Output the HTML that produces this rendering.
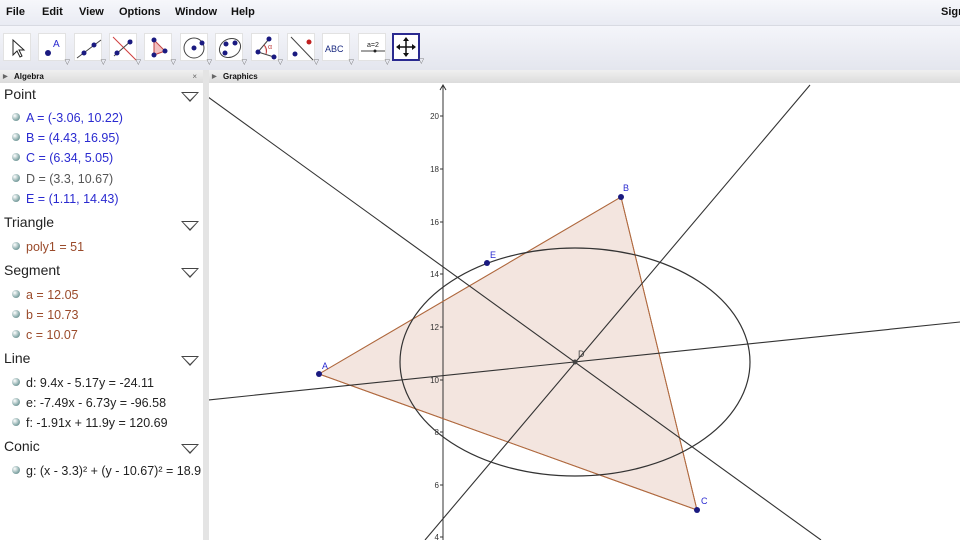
<!DOCTYPE html>
<html><head><meta charset="utf-8"><style>
*{margin:0;padding:0;box-sizing:border-box}
body{width:960px;height:540px;overflow:hidden;background:#fff;font-family:"Liberation Sans",sans-serif;position:relative}
#menu{position:absolute;left:0;top:0;width:960px;height:26px;background:linear-gradient(#f6f7fb,#e9ebf3);border-bottom:1px solid #d8dae2}
#menu span{position:absolute;top:6px;font-size:11px;font-weight:bold;color:#111}
#tb{position:absolute;left:0;top:26px;width:960px;height:44px;background:linear-gradient(#f4f5fa,#e4e6ee)}
.tool{position:absolute;top:7px;width:28px;height:28px;background:#fff;border:1px solid #e2e2e2}
.tool .dd{position:absolute;right:-5px;bottom:-6px;font-size:7px;color:#666}
#ttl{position:absolute;top:70px;height:13px;background:linear-gradient(#f0f0f0,#dcdcdc);font-size:8px;font-weight:bold;color:#111;padding-left:14px;line-height:14px}
#alg{position:absolute;left:0;top:83px;width:203px;height:457px;background:#fff}
#split{position:absolute;left:203px;top:70px;width:6px;height:470px;background:#e4e4e4}
.h{position:absolute;left:4px;font-size:14px;color:#222}
.tri{position:absolute;left:181px;width:0;height:0;border-left:9px solid transparent;border-right:9px solid transparent;border-top:10px solid #444}
.tri:after{content:"";position:absolute;left:-7px;top:-9px;border-left:7px solid transparent;border-right:7px solid transparent;border-top:7px solid #fff}
.it{position:absolute;left:12px;font-size:12.5px;white-space:nowrap}
.it:before{content:"";display:inline-block;width:8px;height:8px;border-radius:50%;background:radial-gradient(circle at 35% 35%,#fff,#8aa 60%,#577);margin-right:6px;vertical-align:1px}
.b{color:#2a2ad0}.g{color:#555}.r{color:#9a4a2a}.k{color:#222}
</style></head><body>
<div id="menu">
<span style="left:6px">File</span><span style="left:42px">Edit</span><span style="left:79px">View</span><span style="left:119px">Options</span><span style="left:175px">Window</span><span style="left:231px">Help</span><span style="left:941px">Sign</span>
</div>
<div id="tb">
<div class="tool" style="left:3px"><svg width="28" height="28"><path d="M9 6 L9 21 L13 17 L16 23 L18 22 L15 16 L20 16 Z" fill="#fff" stroke="#222"/></svg></div>
<div class="tool" style="left:38px"><svg width="28" height="28"><circle cx="9" cy="19" r="3" fill="#1a1a80"/><text x="14" y="13" font-size="10" fill="#2a2ad0" font-family="Liberation Sans">A</text></svg><span class="dd">▽</span></div>
<div class="tool" style="left:74px"><svg width="28" height="28"><line x1="2" y1="24" x2="26" y2="6" stroke="#444"/><circle cx="9" cy="19" r="2.5" fill="#1a1a80"/><circle cx="19" cy="11" r="2.5" fill="#1a1a80"/></svg><span class="dd">▽</span></div>
<div class="tool" style="left:109px"><svg width="28" height="28"><line x1="3" y1="3" x2="26" y2="26" stroke="#d04040"/><line x1="4" y1="22" x2="22" y2="6" stroke="#444"/><circle cx="7" cy="19" r="2.5" fill="#1a1a80"/><circle cx="20" cy="8" r="2.5" fill="#1a1a80"/></svg><span class="dd">▽</span></div>
<div class="tool" style="left:144px"><svg width="28" height="28"><path d="M9 6 L20 17 L9 21Z" fill="#f2c0c0" stroke="#c04040"/><circle cx="9" cy="6" r="2.5" fill="#1a1a80"/><circle cx="20" cy="17" r="2.5" fill="#1a1a80"/><circle cx="9" cy="21" r="2.5" fill="#1a1a80"/></svg><span class="dd">▽</span></div>
<div class="tool" style="left:180px"><svg width="28" height="28"><circle cx="13" cy="14" r="10" fill="none" stroke="#444"/><circle cx="13" cy="14" r="2.5" fill="#1a1a80"/><circle cx="21" cy="9" r="2.5" fill="#1a1a80"/></svg><span class="dd">▽</span></div>
<div class="tool" style="left:215px"><svg width="28" height="28"><ellipse cx="14" cy="14" rx="11" ry="9" fill="none" stroke="#444" transform="rotate(-30 14 14)"/><circle cx="9" cy="19" r="2.5" fill="#1a1a80"/><circle cx="19" cy="9" r="2.5" fill="#1a1a80"/><circle cx="10" cy="10" r="2.5" fill="#1a1a80"/></svg><span class="dd">▽</span></div>
<div class="tool" style="left:251px"><svg width="28" height="28"><path d="M6 18 L17 5 M6 18 L22 23" stroke="#444" fill="none"/><path d="M12 11 A8 8 0 0 1 14 20" fill="#f2c0c0" stroke="#c04040"/><text x="16" y="15" font-size="7" fill="#c04040">α</text><circle cx="17" cy="5" r="2.5" fill="#1a1a80"/><circle cx="6" cy="18" r="2.5" fill="#1a1a80"/><circle cx="22" cy="23" r="2.5" fill="#1a1a80"/></svg><span class="dd">▽</span></div>
<div class="tool" style="left:287px"><svg width="28" height="28"><line x1="3" y1="3" x2="25" y2="26" stroke="#444"/><circle cx="21" cy="8" r="2.5" fill="#c02020"/><circle cx="7" cy="20" r="2.5" fill="#1a1a80"/></svg><span class="dd">▽</span></div>
<div class="tool" style="left:322px"><svg width="28" height="28"><text x="2" y="18" font-size="9" fill="#1a2a80" font-family="Liberation Sans">ABC</text></svg><span class="dd">▽</span></div>
<div class="tool" style="left:358px"><svg width="28" height="28"><text x="8" y="13" font-size="7" fill="#222">a=2</text><line x1="2" y1="17" x2="26" y2="17" stroke="#444"/><circle cx="16" cy="17" r="1.5" fill="#222"/></svg><span class="dd">▽</span></div>
<div class="tool" style="left:392px;border:2px solid #2a2a90"><svg width="24" height="24"><path d="M12 4 V20 M4 12 H20" stroke="#111" stroke-width="1.5"/><path d="M12 2 L9 6 H15Z M12 22 L9 18 H15Z M2 12 L6 9 V15Z M22 12 L18 9 V15Z" fill="#111"/></svg><span class="dd" style="right:-6px">▽</span></div>
</div>
<div id="ttl" style="left:0;width:203px">Algebra<span style="position:absolute;left:3px;top:0;font-size:6px;color:#666">▶</span><span style="position:absolute;right:6px;font-weight:normal;color:#666">×</span></div>
<div id="ttl" style="left:209px;width:751px">Graphics<span style="position:absolute;left:3px;top:0;font-size:6px;color:#666">▶</span></div>
<div id="split"></div>
<div id="alg">
<div class="h" style="top:3px">Point</div><div class="tri" style="top:9px"></div>
<div class="it b" style="top:28px">A = (-3.06, 10.22)</div>
<div class="it b" style="top:48px">B = (4.43, 16.95)</div>
<div class="it b" style="top:68px">C = (6.34, 5.05)</div>
<div class="it g" style="top:89px">D = (3.3, 10.67)</div>
<div class="it b" style="top:109px">E = (1.11, 14.43)</div>
<div class="h" style="top:131px">Triangle</div><div class="tri" style="top:138px"></div>
<div class="it r" style="top:157px">poly1 = 51</div>
<div class="h" style="top:179px">Segment</div><div class="tri" style="top:185px"></div>
<div class="it r" style="top:205px">a = 12.05</div>
<div class="it r" style="top:225px">b = 10.73</div>
<div class="it r" style="top:245px">c = 10.07</div>
<div class="h" style="top:267px">Line</div><div class="tri" style="top:273px"></div>
<div class="it k" style="top:293px">d: 9.4x - 5.17y = -24.11</div>
<div class="it k" style="top:313px">e: -7.49x - 6.73y = -96.58</div>
<div class="it k" style="top:333px">f: -1.91x + 11.9y = 120.69</div>
<div class="h" style="top:355px">Conic</div><div class="tri" style="top:361px"></div>
<div class="it k" style="top:381px">g: (x - 3.3)² + (y - 10.67)² = 18.9</div>
</div>
<svg style="position:absolute;left:0;top:0" width="960" height="540" viewBox="0 0 960 540">
<defs><clipPath id="c"><rect x="209" y="83" width="751" height="457"/></clipPath></defs>
<g clip-path="url(#c)" font-family="Liberation Sans">
<polygon points="319,374 621,197 697,510" fill="#f3e5df" stroke="#b06a40" stroke-width="1"/>
<line x1="443" y1="86" x2="443" y2="540" stroke="#333"/>
<path d="M440 90 L443 85 L446 90" fill="none" stroke="#333"/>
<g font-size="8" fill="#333" text-anchor="end">
<text x="439" y="119">20</text><text x="439" y="172">18</text><text x="439" y="225">16</text><text x="439" y="277">14</text><text x="439" y="330">12</text><text x="439" y="383">10</text><text x="439" y="435">8</text><text x="439" y="488">6</text><text x="439" y="540">4</text>
</g>
<g stroke="#333"><line x1="440" y1="116" x2="443" y2="116"/><line x1="440" y1="169" x2="443" y2="169"/><line x1="440" y1="222" x2="443" y2="222"/><line x1="440" y1="274" x2="443" y2="274"/><line x1="440" y1="327" x2="443" y2="327"/><line x1="440" y1="380" x2="443" y2="380"/><line x1="440" y1="432" x2="443" y2="432"/><line x1="440" y1="485" x2="443" y2="485"/><line x1="440" y1="537" x2="443" y2="537"/></g>
<polygon points="319,374 621,197 697,510" fill="none" stroke="#b06a40" stroke-width="1"/>
<ellipse cx="575" cy="362" rx="175" ry="114" fill="none" stroke="#333" stroke-width="1.2"/>
<g stroke="#333" stroke-width="1.1">
<line x1="208" y1="97" x2="821" y2="540"/>
<line x1="425" y1="540" x2="810" y2="85"/>
<line x1="208" y1="400" x2="960" y2="322"/>
</g>
<g fill="#1a1a80"><circle cx="319" cy="374" r="3"/><circle cx="621" cy="197" r="3"/><circle cx="697" cy="510" r="3"/><circle cx="487" cy="263" r="3"/><circle cx="575" cy="362" r="2.5" fill="#444"/></g>
<g font-size="9" fill="#2a2ad0"><text x="322" y="369">A</text><text x="623" y="191">B</text><text x="701" y="504">C</text><text x="490" y="258">E</text><text x="578" y="357" fill="#444">D</text></g>
</g>
</svg>
</body></html>
